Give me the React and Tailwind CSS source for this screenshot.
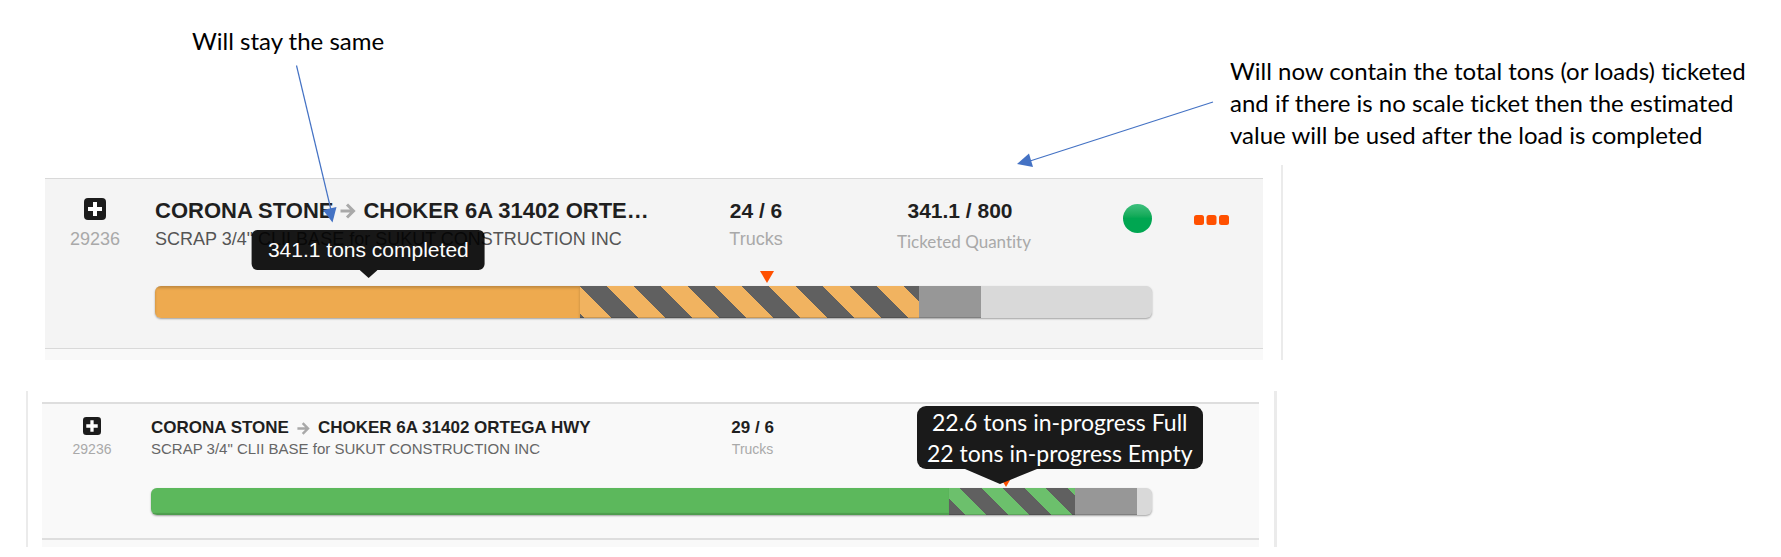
import React from "react";

function PlusIcon({ className }) {
  return (
    <svg viewBox="0 0 22 22" className={className} aria-hidden="true">
      <rect width="22" height="22" rx="4" fill="#1c1c1c" />
      <path d="M11 4V18M4 11H18" stroke="#fff" strokeWidth="4" />
    </svg>
  );
}

function ArrowIcon({ className }) {
  return (
    <svg viewBox="0 0 16 16" className={className} fill="none" stroke="#a9a9a9" strokeWidth="3" aria-hidden="true">
      <path d="M0.500 8H13M7 1.500L13.500 8L7 14.500" />
    </svg>
  );
}

function More() {
  return (
    <button type="button" aria-label="More actions" className="block">
      <svg width="35" height="10" viewBox="0 0 35 10" fill="#ff5000" aria-hidden="true">
        <rect x="0" y="0" width="10" height="10" rx="2.5" />
        <rect x="12.5" y="0" width="10" height="10" rx="2.5" />
        <rect x="25" y="0" width="10" height="10" rx="2.5" />
      </svg>
    </button>
  );
}

function Marker() {
  return (
    <svg width="14" height="12" viewBox="0 0 14 12" fill="#ff5000" aria-hidden="true">
      <path d="M0 0H14L7 12Z" />
    </svg>
  );
}

function OrangeCard() {
  return (
    <section className="flex justify-between border-r-2 border-[#ebebeb] pt-[13px]">
      <div className="mr-[18px] ml-[45px] grow bg-[#f9f9f9] pb-[11px]">
        <div className="grid h-[171px] grid-cols-[110px_1fr_111px] border-y border-[#d9d9d9] bg-[#f4f4f4] pt-[19px]">
          <div className="flex w-[100px] flex-col items-center">
            <button type="button" aria-label="Expand order 29236">
              <PlusIcon className="size-[22px]" />
            </button>
            <span className="mt-[9px] text-[18px] leading-[20px] text-[#a9a9a9]">29236</span>
          </div>
          <div>
            <div className="grid h-[88px] grid-cols-[500fr_202fr_214fr_81fr]">
              <div className="whitespace-nowrap">
                <h2 className="flex items-center text-[22px] leading-[26px] font-bold text-[#1f1f1f]">
                  CORONA STONE
                  <ArrowIcon className="mx-[7px] size-4" />
                  CHOKER 6A 31402 ORTE…
                </h2>
                <p className="mt-[5px] text-[18px] leading-[20px] text-[#555]">
                  SCRAP 3/4" CLII BASE for SUKUT CONSTRUCTION INC
                </p>
              </div>
              <div className="text-center">
                <div className="text-[21px] leading-[26px] font-bold text-[#1f1f1f]">24 / 6</div>
                <div className="mt-[5px] text-[18px] leading-[20px] text-[#a9a9a9]">Trucks</div>
              </div>
              <div className="flex flex-col items-center">
                <div className="pr-2 text-[21px] leading-[26px] font-bold text-[#1f1f1f]">341.1 / 800</div>
                <div className="mt-2 font-[Lato,sans-serif] text-[17px] leading-[20px] text-[#a9a9a9] [font-variant-ligatures:none]">
                  Ticketed Quantity
                </div>
              </div>
              <div className="flex justify-end pt-[6px]">
                <span
                  role="img"
                  aria-label="Active"
                  className="size-[29px] rounded-full bg-linear-to-b from-[#3cc07e] to-[#00a651] to-50%"
                />
              </div>
            </div>
            <div className="relative">
              <div
                role="progressbar"
                aria-label="Tons completed"
                aria-valuenow={341.1}
                aria-valuemin={0}
                aria-valuemax={800}
                className="flex h-8 overflow-hidden rounded-md bg-[#d9d9d9] shadow-[0_1px_2px_rgba(0,0,0,0.35)]"
              >
                <div className="w-[42.6%] bg-[#eeaa4f] shadow-[inset_0_2px_3px_rgba(0,0,0,0.2)]" />
                <div className="w-[34%] bg-[#f1b360] bg-[linear-gradient(45deg,#606060_25%,transparent_25%,transparent_50%,#606060_50%,#606060_75%,transparent_75%)] bg-size-[54px_54px] shadow-[inset_0_-1px_0_rgba(0,0,0,0.15)]" />
                <div className="w-[6.2%] bg-[#979797] shadow-[inset_0_-1px_0_rgba(0,0,0,0.15)]" />
              </div>
              <div className="absolute bottom-[35px] left-[61.4%] -translate-x-1/2">
                <Marker />
              </div>
              <div className="absolute bottom-10 left-[21.4%] flex -translate-x-1/2 flex-col items-center opacity-90">
                <div
                  role="tooltip"
                  className="rounded-md bg-black px-4 py-2 text-[21px] leading-[24px] whitespace-nowrap text-white"
                >
                  341.1 tons completed
                </div>
                <svg width="18" height="8" viewBox="0 0 18 8" aria-hidden="true">
                  <path d="M0 0H18L9 8Z" />
                </svg>
              </div>
            </div>
          </div>
          <div className="pt-[17px] pl-[42px]">
            <More />
          </div>
        </div>
      </div>
    </section>
  );
}

function GreenCard() {
  return (
    <section className="mr-[6px] ml-[26px] flex border-r-[3px] border-l-2 border-[#ebebeb] pt-[11px]">
      <div className="mr-[15px] ml-[14px] grow bg-[#f9f9f9] pb-[7px]">
        <div className="grid h-[138px] grid-cols-[109px_1fr_107px] border-y-2 border-[#dedede] pt-[13px]">
          <div className="flex w-[100px] flex-col items-center">
            <button type="button" aria-label="Expand order 29236">
              <PlusIcon className="size-[18px]" />
            </button>
            <span className="mt-[5px] text-[14px] leading-[18px] text-[#a9a9a9]">29236</span>
          </div>
          <div>
            <div className="grid h-[71px] grid-cols-[500fr_202fr_298fr]">
              <div className="whitespace-nowrap">
                <h2 className="flex items-center text-[17px] leading-[22px] font-bold text-[#1f1f1f]">
                  CORONA STONE
                  <ArrowIcon className="mx-2 size-[13px]" />
                  CHOKER 6A 31402 ORTEGA HWY
                </h2>
                <p className="text-[15px] leading-[20px] text-[#666]">
                  SCRAP 3/4" CLII BASE for SUKUT CONSTRUCTION INC
                </p>
              </div>
              <div className="text-center">
                <div className="text-[17px] leading-[22px] font-bold text-[#1f1f1f]">29 / 6</div>
                <div className="text-[14px] leading-[20px] text-[#a9a9a9]">Trucks</div>
              </div>
            </div>
            <div className="relative">
              <div
                role="progressbar"
                aria-label="Tons completed"
                aria-valuenow={80}
                aria-valuemin={0}
                aria-valuemax={100}
                className="flex h-[27px] overflow-hidden rounded-md bg-[#d9d9d9] shadow-[0_1px_2px_rgba(0,0,0,0.35)]"
              >
                <div className="w-[79.7%] bg-[#5cb85c] shadow-[inset_0_-2px_1px_rgba(0,0,0,0.15)]" />
                <div className="w-[12.6%] bg-[#6cc06c] bg-[linear-gradient(45deg,#606060_25%,transparent_25%,transparent_50%,#606060_50%,#606060_75%,transparent_75%)] bg-size-[43px_43px] bg-position-[11px_0px] shadow-[inset_0_-1px_0_rgba(0,0,0,0.15)]" />
                <div className="w-[6.2%] bg-[#979797] shadow-[inset_0_-1px_0_rgba(0,0,0,0.15)]" />
              </div>
              <div className="absolute bottom-[28px] left-[85.4%] -translate-x-1/2">
                <Marker />
              </div>
              <div className="absolute bottom-[31px] left-[76.5%]">
                <div
                  role="tooltip"
                  className="w-[286px] rounded-[9px] bg-[#1a1a1a] pt-px text-center font-[Lato,sans-serif] text-[23px] leading-[31px] whitespace-nowrap text-white"
                >
                  22.6 tons in-progress Full
                  <br />
                  22 tons in-progress Empty
                </div>
                <svg width="72" height="15" viewBox="0 0 72 15" fill="#1a1a1a" className="ml-[48px] block" aria-hidden="true">
                  <path d="M0 0H72L35 15Z" />
                </svg>
              </div>
            </div>
          </div>
        </div>
      </div>
    </section>
  );
}

export default function App() {
  return (
    <main className="min-h-screen bg-white font-['Liberation_Sans',Arial,sans-serif]">
      <header className="relative grid h-[165px] grid-cols-[1fr_551px] font-[Lato,sans-serif] text-[24px] leading-[32px] text-black [font-variant-ligatures:none]">
        <p className="pt-[25px] pl-[192px]">Will stay the same</p>
        <p className="pt-[55px] whitespace-nowrap">
          Will now contain the total tons (or loads) ticketed
          <br />
          and if there is no scale ticket then the estimated
          <br />
          value will be used after the load is completed
        </p>
        <svg className="absolute top-[65px] left-[290px] z-10" width="50" height="160" viewBox="290 65 50 160" aria-hidden="true">
          <path d="M296.500 65.500L331 210" stroke="#4472c4" strokeWidth="1.200" />
          <path d="M323 210L336.500 207L332.500 222.500Z" fill="#4472c4" />
        </svg>
        <svg className="absolute top-[98px] right-[565px] z-10" width="200" height="70" viewBox="1016 98 200 70" aria-hidden="true">
          <path d="M1213 102L1030 161" stroke="#4472c4" strokeWidth="1.200" />
          <path d="M1017 164L1029 153.500L1033 167Z" fill="#4472c4" />
        </svg>
      </header>
      <div className="flex flex-col gap-[31px] pr-[498px]">
        <OrangeCard />
        <GreenCard />
      </div>
    </main>
  );
}
